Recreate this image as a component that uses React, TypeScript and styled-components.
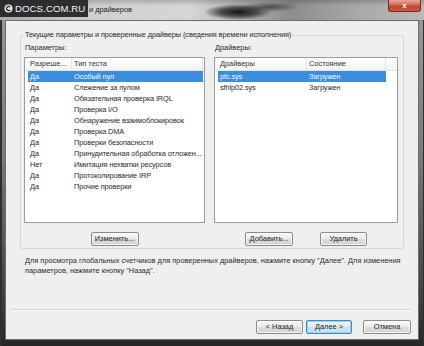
import React from "react";
import styled, { createGlobalStyle } from "styled-components";

const GlobalStyle = createGlobalStyle`
  html, body { margin: 0; padding: 0; }
  body {
    width: 424px; height: 346px; overflow: hidden; background: #2b2b2b;
    font-family: "Liberation Sans", Arial, sans-serif;
  }
  * { box-sizing: border-box; }
`;

const Window = styled.div`
  width: 424px;
  height: 346px;
  display: flex;
  flex-direction: column;
  background: linear-gradient(180deg, #9a9a9a 0%, #7a7a7a 45%, #3a3a3a 90%, #262626 100%);
`;

const TitleBar = styled.div`
  height: 20px;
  flex: none;
  display: flex;
  align-items: flex-start;
  background:
    radial-gradient(ellipse 34px 8px at 238px 12px, rgba(10,10,10,0.95) 0%, rgba(10,10,10,0.6) 55%, rgba(10,10,10,0) 100%),
    radial-gradient(ellipse 30px 5px at 270px 7px, rgba(20,20,20,0.6) 0%, rgba(20,20,20,0) 100%),
    linear-gradient(180deg, rgba(0,0,0,0.18) 0%, rgba(0,0,0,0) 30%),
    linear-gradient(90deg, #a8a8a8 0%, #cfcfcf 95px, #d6d6d6 190px, #8c8c8c 290px, #a9a9a9 360px, #b9b9b9 424px);
`;

const Watermark = styled.div`
  width: 88px;
  height: 17px;
  flex: none;
  display: flex;
  align-items: center;
  gap: 2px;
  padding-left: 4px;
  background: rgba(36, 36, 38, 0.93);
  color: #f2f2f2;
  font-size: 9.6px;
  letter-spacing: 0.1px;
`;

const Title = styled.div`
  font-size: 7.4px;
  line-height: 20px;
  color: #1e1e1e;
  margin-left: 1px;
`;

const CloseButton = styled.div`
  margin-left: auto;
  margin-right: 3px;
  width: 33px;
  height: 12px;
  display: flex;
  align-items: center;
  justify-content: center;
  color: #fff;
  font-size: 8px;
  font-weight: bold;
  border: 1px solid #7a2a22;
  border-top: none;
  border-radius: 0 0 3px 3px;
  background: linear-gradient(180deg, #e5a596 0%, #d46a58 45%, #c2412f 55%, #c95a40 100%);
`;

const Body = styled.div`
  flex: 1;
  display: flex;
  padding: 0 4px 6px 3px;
  border-left: 2px solid #2f2f2f;
  border-right: 1px solid #2f2f2f;
`;

const Client = styled.div`
  flex: 1;
  display: flex;
  flex-direction: column;
  background: #efefef;
  border: 1px solid #6c6c6c;
  color: #2a2a2a;
  font-size: 7.4px;
`;

const Group = styled.fieldset`
  margin: 9px 14px 0 14px;
  padding: 3px 5px 2px 3px;
  border: 1px solid #d6d6d6;
  border-radius: 3px;
  min-width: 0;
`;

const Legend = styled.legend`
  padding: 0 1px;
  font-size: 7.4px;
  line-height: 10px;
  letter-spacing: -0.1px;
`;

const Columns = styled.div`
  display: grid;
  grid-template-columns: 181px 184px;
  gap: 9px;
`;

const Column = styled.div`
  display: flex;
  flex-direction: column;
`;

const Label = styled.div`
  line-height: 10px;
  padding-left: 1px;
`;

const List = styled.div`
  margin-top: 4px;
  height: 166px;
  background: #fff;
  border: 1px solid #9c9c9c;
  overflow: hidden;
`;

const ListHeader = styled.div`
  display: flex;
  height: 13px;
  padding-left: 3px;
  border-bottom: 1px solid #e4e4e4;
  background: linear-gradient(180deg, #ffffff 0%, #f3f3f3 100%);
`;

const HeaderCell = styled.div<{ $w: number }>`
  width: ${(p) => p.$w}px;
  flex: none;
  padding-left: 2px;
  line-height: 12px;
  color: #333;
  white-space: nowrap;
  overflow: hidden;
  border-right: 1px solid #e6e6e6;
`;

const Row = styled.div<{ $selected?: boolean }>`
  display: flex;
  height: 11px;
  margin-left: 3px;
  width: fit-content;
  background: ${(p) => (p.$selected ? "#3b8de0" : "transparent")};
  color: ${(p) => (p.$selected ? "#f4f8ff" : "#2a2a2a")};
`;

const Cell = styled.div<{ $w: number }>`
  width: ${(p) => p.$w}px;
  flex: none;
  padding-left: 2px;
  line-height: 11px;
  white-space: nowrap;
  letter-spacing: -0.12px;
`;

const ButtonRow = styled.div<{ $gap?: number }>`
  margin-top: 9px;
  display: flex;
  justify-content: center;
  gap: ${(p) => p.$gap ?? 0}px;
`;

const Button = styled.button<{ $w: number; $primary?: boolean }>`
  width: ${(p) => p.$w}px;
  height: 14px;
  padding: 0;
  font-family: inherit;
  font-size: 7.4px;
  line-height: 12px;
  color: #222;
  border: 1px solid ${(p) => (p.$primary ? "#3f88c4" : "#8b8b8b")};
  border-radius: 2px;
  background: ${(p) =>
    p.$primary
      ? "linear-gradient(180deg, #eef6fb 0%, #dcecf6 50%, #cde3f1 51%, #c6dfef 100%)"
      : "linear-gradient(180deg, #f7f7f7 0%, #ebebeb 50%, #dddddd 51%, #d3d3d3 100%)"};
  box-shadow: inset 0 0 0 1px ${(p) => (p.$primary ? "rgba(150,210,245,0.9)" : "rgba(255,255,255,0.75)")};
`;

const Description = styled.div`
  margin: 7px 0 0 19px;
  line-height: 10px;
`;

const Spacer = styled.div`
  flex: 1;
`;

const Separator = styled.div`
  height: 2px;
  margin: 0 7px 9px 6px;
  border-top: 1px solid #d3d3d3;
  border-bottom: 1px solid #fbfbfb;
`;

const FooterBar = styled.div`
  display: flex;
  justify-content: flex-end;
  align-items: center;
  padding: 0 7px 5px 0;
  gap: 3px;
`;

const FooterGap = styled.div`
  width: 5px;
`;

const params: [string, string][] = [
  ["Да", "Особый пул"],
  ["Да", "Слежение за пулом"],
  ["Да", "Обязательная проверка IRQL"],
  ["Да", "Проверка I/O"],
  ["Да", "Обнаружение взаимоблокировок"],
  ["Да", "Проверка DMA"],
  ["Да", "Проверки безопасности"],
  ["Да", "Принудительная обработка отложен..."],
  ["Нет", "Имитация нехватки ресурсов"],
  ["Да", "Протоколирование IRP"],
  ["Да", "Прочие проверки"],
];

const drivers: [string, string][] = [
  ["pfc.sys", "Загружен"],
  ["sfhlp02.sys", "Загружен"],
];

const LogoIcon = () => (
  <svg width="9" height="9" viewBox="0 0 9 9">
    <circle cx="4.5" cy="4.5" r="4" fill="#e8e8e8" />
    <path d="M6.2 3.1 A2.1 2.1 0 1 0 6.2 5.9" fill="none" stroke="#2a2a2a" strokeWidth="1.3" />
  </svg>
);

export default function App() {
  return (
    <>
      <GlobalStyle />
      <Window>
        <TitleBar>
          <Watermark>
            <LogoIcon />
            <span>DOCS.COM.RU</span>
          </Watermark>
          <Title>и драйверов</Title>
          <CloseButton>x</CloseButton>
        </TitleBar>
        <Body>
          <Client>
            <Group>
              <Legend>Текущие параметры и проверенные драйверы (сведения времени исполнения)</Legend>
              <Columns>
                <Column>
                  <Label>Параметры:</Label>
                  <List>
                    <ListHeader>
                      <HeaderCell $w={44}>Разреше...</HeaderCell>
                      <HeaderCell $w={131}>Тип теста</HeaderCell>
                    </ListHeader>
                    {params.map(([a, b], i) => (
                      <Row key={i} $selected={i === 0}>
                        <Cell $w={44}>{a}</Cell>
                        <Cell $w={131}>{b}</Cell>
                      </Row>
                    ))}
                  </List>
                  <ButtonRow>
                    <Button $w={48}>Изменить...</Button>
                  </ButtonRow>
                </Column>
                <Column>
                  <Label>Драйверы:</Label>
                  <List>
                    <ListHeader>
                      <HeaderCell $w={89}>Драйверы</HeaderCell>
                      <HeaderCell $w={79}>Состояние</HeaderCell>
                    </ListHeader>
                    {drivers.map(([a, b], i) => (
                      <Row key={i} $selected={i === 0}>
                        <Cell $w={89}>{a}</Cell>
                        <Cell $w={79}>{b}</Cell>
                      </Row>
                    ))}
                  </List>
                  <ButtonRow $gap={27}>
                    <Button $w={48}>Добавить...</Button>
                    <Button $w={47}>Удалить</Button>
                  </ButtonRow>
                </Column>
              </Columns>
            </Group>
            <Description>
              Для просмотра глобальных счетчиков для проверенных драйверов, нажмите кнопку "Далее". Для изменения
              <br />
              параметров, нажмите кнопку "Назад".
            </Description>
            <Spacer />
            <Separator />
            <FooterBar>
              <Button $w={47}>&lt; Назад</Button>
              <Button $w={46} $primary>Далее &gt;</Button>
              <FooterGap />
              <Button $w={48}>Отмена</Button>
            </FooterBar>
          </Client>
        </Body>
      </Window>
    </>
  );
}
